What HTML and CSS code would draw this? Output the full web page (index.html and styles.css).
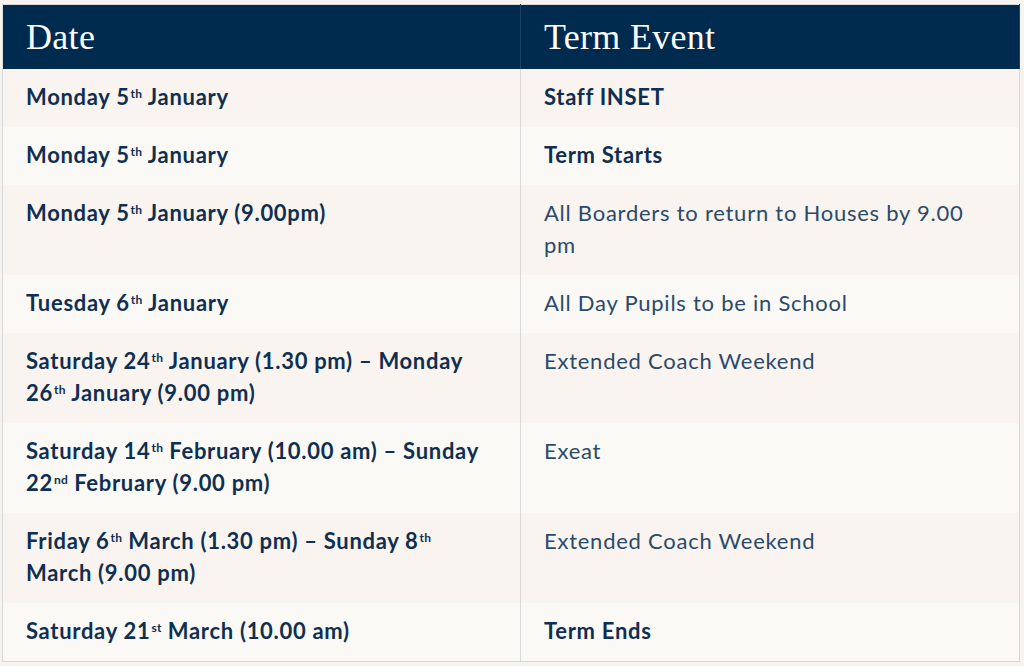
FILE: index.html
```html
<!DOCTYPE html>
<html lang="en">
<head>
<meta charset="utf-8">
<title>Term Dates</title>
<link rel="stylesheet" href="styles.css">
</head>
<body>
<table class="terms">
  <colgroup><col class="col-date"><col class="col-event"></colgroup>
  <thead>
    <tr><th>Date</th><th>Term Event</th></tr>
  </thead>
  <tbody>
    <tr><td class="date">Monday 5<sup>th</sup> January</td><td class="strong">Staff INSET</td></tr>
    <tr><td class="date">Monday 5<sup>th</sup> January</td><td class="strong">Term Starts</td></tr>
    <tr><td class="date">Monday 5<sup>th</sup> January (9.00pm)</td><td>All Boarders to return to Houses by 9.00 pm</td></tr>
    <tr><td class="date">Tuesday 6<sup>th</sup> January</td><td>All Day Pupils to be in School</td></tr>
    <tr><td class="date">Saturday 24<sup>th</sup> January (1.30 pm) – Monday 26<sup>th</sup> January (9.00 pm)</td><td>Extended Coach Weekend</td></tr>
    <tr><td class="date">Saturday 14<sup>th</sup> February (10.00 am) – Sunday 22<sup>nd</sup> February (9.00 pm)</td><td>Exeat</td></tr>
    <tr><td class="date">Friday 6<sup>th</sup> March (1.30 pm) – Sunday 8<sup>th</sup> March (9.00 pm)</td><td>Extended Coach Weekend</td></tr>
    <tr><td class="date">Saturday 21<sup>st</sup> March (10.00 am)</td><td class="strong">Term Ends</td></tr>
  </tbody>
</table>
</body>
</html>
```

FILE: styles.css
```css
html, body {
  margin: 0;
  padding: 0;
  background: #f7f3ee;
}
body {
  padding: 4px 4px 0 2px;
}
.terms {
  width: 1018px;
  border-collapse: collapse;
  border: 1px solid #d9d9d9;
  font-family: Lato, "Noto Sans", sans-serif;
  font-size: 22px;
  line-height: 32px;
  color: #2a4a6c;
}
.col-date { width: 518px; }
.terms th {
  background: #002b4f;
  color: #ffffff;
  font-family: "Liberation Serif", "DejaVu Serif", serif;
  font-weight: 400;
  font-size: 36px;
  letter-spacing: 0.3px;
  text-align: left;
  height: 64px;
  padding: 0 23px;
  box-sizing: border-box;
  border-right: 1px solid #1d4066;
  vertical-align: middle;
}
.terms td {
  padding: 12px 23px 14px;
  vertical-align: top;
  border-right: 1px solid #d9d9d9;
  letter-spacing: 0.75px;
}
.terms tbody tr:nth-child(odd) { background: #f9f4ef; }
.terms tbody tr:nth-child(even) { background: #fbf9f6; }
.terms td.date, .terms td.strong {
  font-weight: 700;
  color: #0f2f52;
  letter-spacing: 0.7px;
}
.terms sup {
  font-size: 12px;
  line-height: 0;
  vertical-align: 7px;
  margin-left: 1px;
  letter-spacing: 0.3px;
}
```
